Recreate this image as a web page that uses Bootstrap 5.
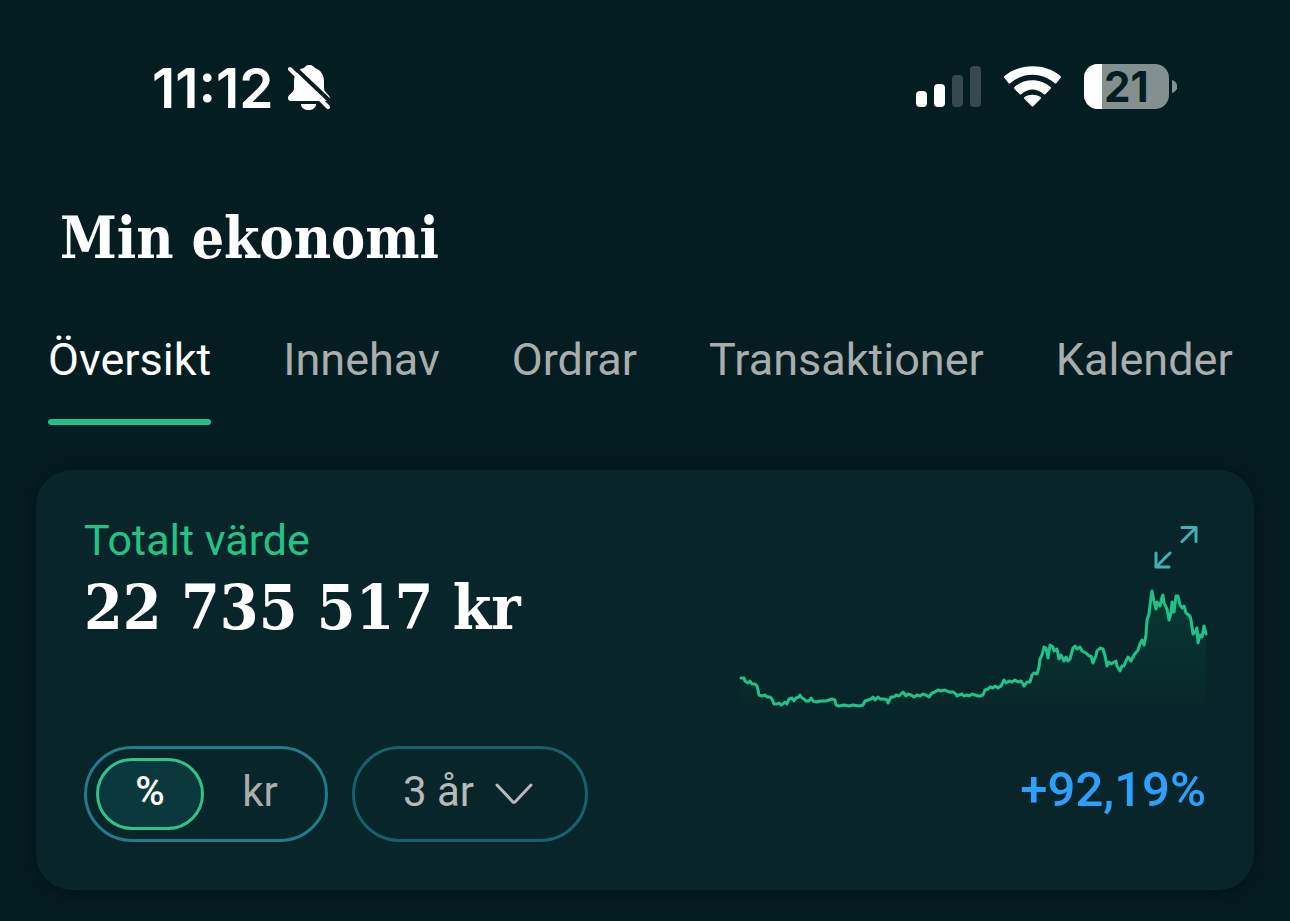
<!DOCTYPE html>
<html lang="sv">
<head>
<meta charset="utf-8">
<meta name="viewport" content="width=device-width, initial-scale=1">
<title>Min ekonomi</title>
<link href="https://cdn.jsdelivr.net/npm/bootstrap@5.3.0/dist/css/bootstrap.min.css" rel="stylesheet">
<style>
  body { background: #041d20; color: #fff; font-family: Roboto, "Liberation Sans", sans-serif; }
  .slab { font-family: "Roboto Slab", "DejaVu Serif Condensed", "DejaVu Serif", serif; font-stretch: condensed; font-weight: 700; }
  .status-bar { padding: 56px 113px 0 152px; height: 120px; }
  .clock { font: 600 55px/64px Inter, "Liberation Sans", sans-serif; }
  .bell { margin: 8px 0 0 11px; }
  .battery-level { font: 700 42px/48px Inter, "Liberation Sans", sans-serif; fill: #041d20; }
  .page-title { font-size: 57px; line-height: 72px; margin: 82px 60px 0; }
  .tabs { margin: 60px 48px 0; gap: 72px; }
  .tabs .nav-link { padding: 0 0 33px; font-size: 45px; line-height: 52px; color: #a9adad; border-bottom: 6px solid transparent; position: relative; }
  .tabs .nav-link.active { color: #fff; }
  .tabs .nav-link.active::after { content: ""; position: absolute; left: 0; right: 0; bottom: -6px; height: 6px; border-radius: 3px; background: #1fc28a; }
  .value-card { margin: 45px 36px 31px; padding: 48px; border: 0; border-radius: 36px; background: #082629; color: #fff; box-shadow: 0 2px 22px 2px #00131a; }
  .value-label { color: #24c285; font-size: 43px; line-height: 44px; }
  .value-sum { font-size: 62px; line-height: 92px; }
  .overview { height: 228px; }
  .expand { margin: 7px 8px 0 0; width: 44px; height: 44px; }
  .chart { margin-top: 17px; width: 468px; height: 128px; overflow: visible; }
  .unit-switch { border: 3px solid #217b88; border-radius: 48px; padding: 9px; height: 96px; width: 244px; }
  .unit-switch .btn { flex: 1 1 0; border: 3px solid transparent; border-radius: 36px; padding: 0; font-size: 42px; line-height: 62px; color: #a9adad; }
  .unit-switch .btn-check:checked + .btn { flex: 0 0 108px; color: #fff; font-weight: 500; font-size: 40px; background: #0a383c; border-color: #30c386; }
  .period { appearance: none; width: 236px; height: 96px; padding: 0 0 6px 48px; border: 3px solid #17616a; border-radius: 48px; background: transparent; color: #b6baba; font-size: 42px; }
  .period-arrow { position: absolute; right: 54px; top: 36px; pointer-events: none; }
  .change { color: #2ca0ff; font-weight: 500; font-size: 49px; line-height: 88px; }
</style>
</head>
<body>
<header class="status-bar d-flex justify-content-between">
  <div class="d-flex">
    <span class="clock">11:12</span>
    <svg class="bell" width="48" height="48" viewBox="0 0 48 48" role="img" aria-label="Ljud av">
      <path fill="#fff" d="M24 1c4 0 5 2 6 3 6 2 9 7 9 14v6c0 5 6 6 6 11 0 1-1 2-2 2H6c-2 0-3-1-3-3 0-4 6-5 6-10v-6c0-8 4-13 10-14 1-1 2-3 5-3zM16 40h15c0 8-15 8-15 0z"/>
      <path fill="#041d20" d="M0 0H12L4 8z"/>
      <path stroke="#041d20" stroke-width="4" d="M7 1 48 40"/>
      <path stroke="#fff" stroke-width="4" stroke-linecap="round" d="M5 5 43 43"/>
    </svg>
  </div>
  <div>
    <svg width="262" height="64" viewBox="915 56 262 64" class="d-block" role="img" aria-label="Signal, wifi och batteri 21 procent">
      <g fill="#fff"><rect x="916" y="91" width="11" height="16" rx="4"/><rect x="934" y="84" width="11" height="23" rx="4"/></g>
      <g fill="#364a4d"><rect x="952" y="75" width="11" height="32" rx="4"/><rect x="970" y="66" width="11" height="41" rx="4"/></g>
      <g fill="#fff">
        <path d="M1004.500 78q-1-1 0-2c15-13 41-13 56 0q1 1 0 2l-4 5q-1 1-2 0c-13-11-31-11-44 0q-1 1-2 0z"/>
        <path d="M1014.500 89q-1-1 0-2c10-9 26-9 36 0q1 1 0 2l-5 5q-1 1-2 0c-7-6-15-6-22 0q-1 1-2 0z"/>
        <path d="M1024.500 99q-1-1 0-2c5-3 11-3 16 0q1 1 0 2l-7 7q-1 1-2 0z"/>
      </g>
      <clipPath id="batteryShape"><rect x="1084" y="64" width="85" height="45" rx="14"/></clipPath>
      <g clip-path="url(#batteryShape)"><path fill="#839090" d="M1084 64h85v45h-85z"/><path fill="#fff" d="M1084 64h18v45h-18z"/></g>
      <path fill="#839090" d="M1172 80c7 2 7 11 0 13z"/>
      <text class="battery-level" x="1104" y="102">21</text>
    </svg>
  </div>
</header>

<main>
  <h1 class="page-title slab">Min ekonomi</h1>

  <nav class="nav tabs flex-nowrap" aria-label="Min ekonomi">
    <a class="nav-link active" aria-current="page" href="#oversikt">Översikt</a>
    <a class="nav-link" href="#innehav">Innehav</a>
    <a class="nav-link" href="#ordrar">Ordrar</a>
    <a class="nav-link" href="#transaktioner">Transaktioner</a>
    <a class="nav-link" href="#kalender">Kalender</a>
  </nav>

  <section class="card value-card" id="oversikt">
    <div class="overview d-flex justify-content-between">
      <div>
        <div class="value-label">Totalt värde</div>
        <div class="value-sum slab text-nowrap">22 735 517 kr</div>
      </div>
      <div class="d-flex flex-column align-items-end">
        <button type="button" class="btn expand p-0 border-0 d-flex" aria-label="Förstora diagram">
          <svg width="44" height="44" viewBox="0 0 44 44" fill="none" stroke="#45aebb" stroke-width="3" stroke-linecap="round" stroke-linejoin="round"><path d="M28 2.500h14v14M42 2.500 28 16.500M2 28v14h13M2 42l14-14"/></svg>
        </button>
        <svg class="chart" viewBox="738 586 468 128" role="img" aria-label="Utveckling 3 år">
          <defs>
            <linearGradient id="areaFade" x1="0" y1="590" x2="0" y2="710" gradientUnits="userSpaceOnUse"><stop stop-color="#00694a" stop-opacity=".28"/><stop offset="1" stop-color="#00694a" stop-opacity="0"/></linearGradient>
          </defs>
          <path fill="url(#areaFade)" d="M741 678 757 685 760 696 774 704 800 697 836 701 860 706 880 698 905 692 930 693 945 690 980 695 985 690 1000 683 1028 684 1037 673 1045 648 1053 648 1067 660 1075 647 1093 663 1102 648 1107 666 1120 671 1145 643 1149 613 1152 595 1156 607 1163 598 1169 620 1176 598 1190 616 1198 640 1206 632V712H741z"/>
          <path fill="none" stroke="#1dc388" stroke-width="3" stroke-linejoin="round" stroke-linecap="round" d="M741 678 744 678 745 681 748 683 750 681 752 684 755 684 757 686 758 690 759 695 762 696 765 695 767 697 770 697 772 699 774 704 777 704 779 703 781 705 783 704 785 702 787 704 789 699 792 698 794 701 796 698 799 697 800 695 802 698 804 699 806 701 809 701 811 698 813 701 817 702 820 701 826 701 829 700 832 699 835 700 836 705 839 706 844 705 849 706 853 705 859 706 863 705 865 701 868 700 871 699 873 697 875 700 878 697 880 699 884 699 887 700 888 703 891 697 894 697 896 695 899 696 901 694 903 692 906 696 908 694 911 695 914 697 917 695 920 696 923 694 926 695 929 697 932 693 935 692 938 690 941 691 945 690 949 692 953 692 956 694 957 696 959 695 962 694 964 696 967 695 969 696 972 694 975 695 978 696 980 696 983 695 985 690 988 689 990 687 993 688 995 686 998 688 1001 686 1004 680 1006 683 1009 681 1012 682 1015 680 1018 682 1021 681 1023 684 1024 686 1027 682 1030 682 1032 675 1034 673 1037 674 1039 667 1040 659 1042 655 1044 647 1046 648 1048 658 1050 645 1053 647 1054 651 1057 649 1059 659 1061 655 1064 661 1066 657 1068 661 1070 659 1073 648 1075 646 1077 649 1080 647 1082 651 1086 653 1089 656 1091 656 1093 663 1096 656 1097 651 1100 648 1103 649 1105 656 1107 666 1109 662 1111 664 1116 661 1117 666 1120 671 1122 666 1124 666 1126 661 1128 657 1131 661 1134 655 1138 650 1140 644 1142 640 1144 645 1146 635 1147 620 1149 614 1150 605 1152 591 1154 601 1156 609 1157 602 1160 606 1162 597 1163 595 1164 603 1167 609 1169 620 1171 613 1172 602 1174 612 1176 596 1178 596 1180 605 1182 608 1184 606 1186 613 1190 616 1191 620 1192 627 1193 634 1195 633 1197 628 1198 643 1200 635 1202 637 1204 626 1206 634"/>
        </svg>
      </div>
    </div>

    <div class="d-flex align-items-start">
      <div class="unit-switch d-flex" role="group" aria-label="Visa i">
        <input class="btn-check" type="radio" name="unit" id="unitPercent" checked>
        <label class="btn" for="unitPercent">%</label>
        <input class="btn-check" type="radio" name="unit" id="unitKr">
        <label class="btn" for="unitKr">kr</label>
      </div>
      <div class="position-relative ms-4">
        <select class="period" id="period" aria-label="Period"><option>3 år</option></select>
        <svg class="period-arrow" width="40" height="24" viewBox="0 0 40 24" fill="none" stroke="#b6baba" stroke-width="3" stroke-linecap="round" stroke-linejoin="round"><path d="m3 3 16 17q1 1 2 0L37 3"/></svg>
      </div>
      <div class="change ms-auto">+92,19%</div>
    </div>
  </section>
</main>
<script src="https://cdn.jsdelivr.net/npm/bootstrap@5.3.0/dist/js/bootstrap.bundle.min.js"></script>
</body>
</html>
